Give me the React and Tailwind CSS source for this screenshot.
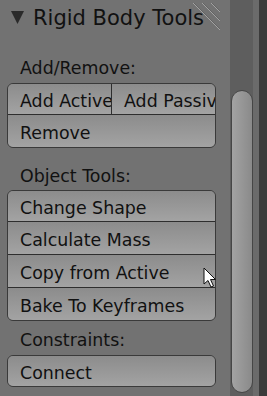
import React from "react";

const font = { fontFamily: '"DejaVu Sans", "Liberation Sans", sans-serif' };

function Row({ children, first, h = 33 }) {
  return (
    <div
      className={`flex items-center pt-[4px] pl-[12px] whitespace-nowrap overflow-hidden text-[17.4px] text-[#111111] bg-gradient-to-b from-[#8c8c8c] to-[#a3a3a3] ${first ? "" : "border-t border-[#2e2e2e]"}`}
      style={{ height: h }}
    >
      {children}
    </div>
  );
}

function Label({ children }) {
  return (
    <div className="pl-[20px] h-[20px] leading-[20px] text-[17.4px] text-[#111111] whitespace-nowrap">
      {children}
    </div>
  );
}

export default function App() {
  return (
    <div className="w-[267px] h-[396px] flex overflow-hidden" style={font}>
      <div className="w-[230px] h-full bg-[#727272] flex flex-col relative">
        <div className="relative h-[58px] pt-[6px] flex items-start">
          <svg className="ml-[11px] mt-[5px]" width="13" height="14" viewBox="0 0 13 14">
            <polygon points="0,0 13,0 6.5,13" fill="#2a2a2a" />
          </svg>
          <div className="ml-[9px] h-[24px] leading-[24px] text-[21px] text-[#111111] whitespace-nowrap">
            Rigid Body Tools
          </div>
          <svg className="absolute left-[192px] top-[2px]" width="30" height="30" viewBox="0 0 30 30">
            <g strokeWidth="1">
              <line x1="1" y1="1" x2="28" y2="28" stroke="#a2a2a2" />
              <line x1="2" y1="1" x2="28" y2="27" stroke="#5a5a5a" opacity="0.6" />
              <line x1="10" y1="1" x2="28" y2="19" stroke="#a2a2a2" />
              <line x1="11" y1="1" x2="28" y2="18" stroke="#5a5a5a" opacity="0.6" />
              <line x1="19" y1="1" x2="28" y2="10" stroke="#a2a2a2" />
              <line x1="20" y1="1" x2="28" y2="9" stroke="#5a5a5a" opacity="0.6" />
            </g>
          </svg>
        </div>

        <Label>Add/Remove:</Label>
        <div className="mt-[5px] ml-[7px] w-[209px] rounded-[6px] border border-[#3a3a3a] overflow-hidden">
          <div className="flex">
            <div className="w-[104px] border-r border-[#2e2e2e]">
              <Row first h={30}>Add Active</Row>
            </div>
            <div className="flex-1 min-w-0">
              <Row first h={30}>Add Passive</Row>
            </div>
          </div>
          <Row>Remove</Row>
        </div>

        <div className="mt-[18px]">
          <Label>Object Tools:</Label>
        </div>
        <div className="mt-[4px] ml-[7px] w-[209px] rounded-[6px] border border-[#3a3a3a] overflow-hidden">
          <Row first h={30}>Change Shape</Row>
          <Row>Calculate Mass</Row>
          <Row>Copy from Active</Row>
          <Row>Bake To Keyframes</Row>
        </div>

        <div className="mt-[9px]">
          <Label>Constraints:</Label>
        </div>
        <div className="mt-[5px] ml-[7px] w-[209px] rounded-[6px] border border-[#3a3a3a] overflow-hidden">
          <Row first h={30}>Connect</Row>
        </div>

        <svg className="absolute left-[203px] top-[267px]" width="14" height="22" viewBox="0 0 14 22">
          <path d="M1 1 L1 17 L5 13.5 L8 20 L10.5 19 L7.5 12.5 L12.5 12.5 Z" fill="#ffffff" stroke="#111111" strokeWidth="1" strokeLinejoin="round" />
        </svg>
      </div>

      <div className="w-[23px] h-full bg-[#5e5e5e] pt-[90px] pb-[3px] pl-[1px]">
        <div className="w-[22px] h-full rounded-full border border-[#464646] bg-gradient-to-r from-[#a3a3a3] to-[#8a8a8a]" />
      </div>
      <div className="w-[6px] h-full bg-[#6b6b6b]" />
      <div className="flex-1 h-full bg-[#3b3b3b]" />
    </div>
  );
}
